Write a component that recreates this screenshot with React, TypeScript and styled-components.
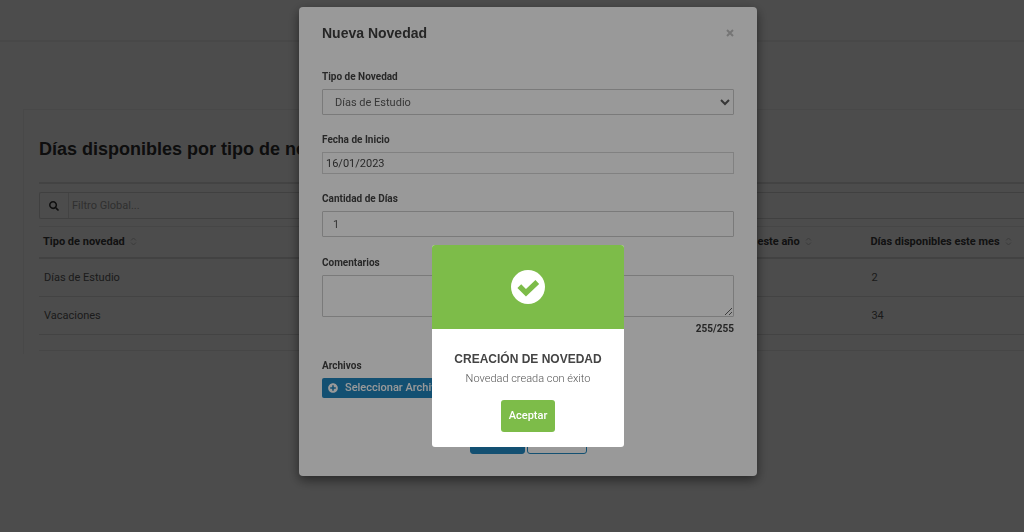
import React from "react";
import styled, { createGlobalStyle } from "styled-components";
import { FaPlusCircle, FaSearch } from "react-icons/fa";

const GlobalStyle = createGlobalStyle`
  *, *::before, *::after { box-sizing: border-box; }
  body {
    margin: 0;
    overflow: hidden;
    background: #fff;
    color: #5c5c5c;
    font: 11px/16px Roboto, "Liberation Sans", sans-serif;
  }
  button, input, select, textarea { font: inherit; color: inherit; }
`;

const headingFont = `"Liberation Sans", Arial, sans-serif`;

const TopBar = styled.header`
  height: 42px;
  border-bottom: 2px solid #f2f2f2;
`;

const Panel = styled.section`
  margin: 67px 0 0 23px;
  padding: 0 0 3px 15px;
  border: 1px solid #f0f0f0;
  border-width: 1px 0 0 1px;
`;

const PanelTitle = styled.h2`
  margin: 0;
  padding: 28px 0 21px;
  border-bottom: 2px solid #e0e0e0;
  color: #303030;
  font: bold 18px/23px ${headingFont};
  white-space: nowrap;
`;

const SearchGroup = styled.div`
  display: flex;
  height: 27px;
  margin: 8px 0 7px;
  border: 1px solid #d8d8d8;
  border-right: 0;
  border-radius: 2px 0 0 2px;
`;

const SearchIcon = styled.label`
  display: flex;
  align-items: center;
  justify-content: center;
  width: 29px;
  border-right: 1px solid #e2e2e2;
  color: #333;
  font-size: 10px;
`;

const SearchInput = styled.input`
  flex: 1;
  min-width: 0;
  padding: 0 3px;
  border: 0;
  outline: 0;
  background: transparent;
  &::placeholder { color: #a0a0a0; }
`;

const Table = styled.table`
  width: 100%;
  table-layout: fixed;
  border-collapse: separate;
  border-spacing: 0;
  border-top: 1px solid #eaeaea;
`;

const Column = styled.col<{ $share: number }>`
  width: ${(p) => p.$share}%;
`;

const HeadCell = styled.th`
  height: 32px;
  padding: 0 4px;
  border-bottom: 2px solid #dcdcdc;
  color: #3c3c3c;
  font-size: 11px;
  text-align: left;
  white-space: nowrap;
  svg { margin-left: 5px; vertical-align: -1px; }
`;

const Cell = styled.td`
  height: 38px;
  padding: 0 5px;
  border-bottom: 1px solid #e0e0e0;
`;

const TableEnd = styled.div`
  height: 16px;
  border-bottom: 1px solid #eaeaea;
`;

const Backdrop = styled.div<{ $shade: number; $top: number }>`
  position: fixed;
  inset: 0;
  display: flex;
  justify-content: center;
  align-items: flex-start;
  padding: ${(p) => p.$top}px 0 0 32px;
  background: rgba(0, 0, 0, ${(p) => p.$shade});
`;

const Dialog = styled.div`
  width: 458px;
  padding: 16px 23px 22px;
  border-radius: 4px;
  background: #fff;
  box-shadow: 0 4px 12px rgba(0, 0, 0, 0.5);
`;

const DialogHeader = styled.div`
  display: flex;
  align-items: center;
  justify-content: space-between;
  height: 20px;
  margin-bottom: 26px;
`;

const DialogTitle = styled.h3`
  margin: 0;
  color: #404040;
  font: bold 14px/20px ${headingFont};
`;

const CloseButton = styled.button`
  display: flex;
  padding: 0;
  border: 0;
  background: transparent;
  color: #c4c4c4;
`;

const Field = styled.div<{ $gap?: number }>`
  display: flex;
  flex-direction: column;
  margin-bottom: ${(p) => p.$gap ?? 17}px;
`;

const Label = styled.label`
  margin-bottom: 4px;
  color: #444;
  font-size: 10px;
  font-weight: bold;
  line-height: 16px;
`;

const Select = styled.select`
  height: 26px;
  padding: 0 8px;
  border: 1px solid #ccc;
  border-radius: 1px;
  background: #fff;
`;

const DateInput = styled.input`
  height: 22px;
  padding: 0 3px;
  border: 1px solid #d8d8d8;
  color: #444;
`;

const NumberInput = styled.input`
  height: 26px;
  padding: 0 10px;
  border: 1px solid #ccc;
  border-radius: 1px;
`;

const TextArea = styled.textarea`
  height: 42px;
  padding: 4px 10px;
  border: 1px solid #ccc;
  border-radius: 1px;
`;

const Counter = styled.span`
  align-self: flex-end;
  margin-top: 4px;
  color: #404040;
  font-size: 10px;
  font-weight: bold;
`;

const FileButton = styled.button`
  display: flex;
  align-items: center;
  align-self: flex-start;
  gap: 7px;
  height: 20px;
  padding: 0 6px;
  border: 0;
  border-radius: 2px;
  background: #2186be;
  color: #fff;
  font-weight: 500;
`;

const Actions = styled.div`
  display: flex;
  justify-content: center;
  gap: 2px;
`;

const ActionButton = styled.button<{ $primary?: boolean }>`
  width: ${(p) => (p.$primary ? 55 : 60)}px;
  height: 28px;
  padding: 0 0 8px;
  border: 1px solid #2186be;
  border-radius: 3px;
  background: ${(p) => (p.$primary ? "#2186be" : "#fff")};
  color: ${(p) => (p.$primary ? "#fff" : "#2186be")};
`;

const Alert = styled.div`
  width: 192px;
  overflow: hidden;
  border-radius: 3px;
  background: #fff;
  text-align: center;
`;

const AlertBanner = styled.div`
  display: flex;
  align-items: center;
  justify-content: center;
  height: 84px;
  background: #7dbc49;
`;

const AlertBody = styled.div`
  display: flex;
  flex-direction: column;
  align-items: center;
  padding: 20px 0 15px;
`;

const AlertTitle = styled.h4`
  margin: 0;
  color: #444;
  font: bold 12px/20px ${headingFont};
  white-space: nowrap;
`;

const AlertText = styled.p`
  margin: 2px 0 13px;
  color: #555;
  font-weight: 300;
`;

const AcceptButton = styled.button`
  width: 54px;
  height: 32px;
  padding: 0;
  border: 0;
  border-radius: 3px;
  background: #7dbc49;
  color: #fff;
  font-weight: 500;
`;

const SortIcon = () => (
  <svg width="7" height="9" viewBox="0 0 7 9" fill="none" stroke="#c4c4c4" aria-hidden="true">
    <path d="M1 3.5 3.5 1 6 3.5M1 5.5 3.5 8 6 5.5" />
  </svg>
);

const SuccessIcon = () => (
  <svg width="34" height="34" viewBox="-17 -17 34 34" fill="none" aria-hidden="true">
    <circle r="17" fill="#fff" />
    <path d="M-8.7 -.9 -2 5.8 9.3 -5" stroke="#7dbc49" strokeWidth="5.4" />
  </svg>
);

const rows = [
  { type: "Días de Estudio", month: 2 },
  { type: "Vacaciones", month: 34 },
];

export default function App() {
  return (
    <>
      <GlobalStyle />
      <TopBar />
      <Panel>
        <PanelTitle>Días disponibles por tipo de novedad</PanelTitle>
        <SearchGroup>
          <SearchIcon htmlFor="filter" aria-label="Filtro Global">
            <FaSearch />
          </SearchIcon>
          <SearchInput id="filter" placeholder="Filtro Global..." />
        </SearchGroup>
        <Table>
          <colgroup>
            <Column $share={64} />
            <Column $share={20} />
            <Column $share={16} />
          </colgroup>
          <thead>
            <tr>
              <HeadCell>Tipo de novedad<SortIcon /></HeadCell>
              <HeadCell>Días disponibles este año<SortIcon /></HeadCell>
              <HeadCell>Días disponibles este mes<SortIcon /></HeadCell>
            </tr>
          </thead>
          <tbody>
            {rows.map((row) => (
              <tr key={row.type}>
                <Cell>{row.type}</Cell>
                <Cell />
                <Cell>{row.month}</Cell>
              </tr>
            ))}
          </tbody>
        </Table>
        <TableEnd />
      </Panel>

      <Backdrop $shade={0.5} $top={7}>
        <Dialog role="dialog" aria-labelledby="dialog-title">
          <DialogHeader>
            <DialogTitle id="dialog-title">Nueva Novedad</DialogTitle>
            <CloseButton aria-label="Cerrar">
              <svg width="8" height="8" viewBox="0 0 8 8" stroke="currentColor" strokeWidth="2">
                <path d="M1 1 7 7M7 1 1 7" />
              </svg>
            </CloseButton>
          </DialogHeader>
          <Field>
            <Label htmlFor="type">Tipo de Novedad</Label>
            <Select id="type">
              <option>Días de Estudio</option>
              <option>Vacaciones</option>
            </Select>
          </Field>
          <Field>
            <Label htmlFor="start">Fecha de Inicio</Label>
            <DateInput id="start" defaultValue="16/01/2023" />
          </Field>
          <Field $gap={18}>
            <Label htmlFor="days">Cantidad de Días</Label>
            <NumberInput id="days" defaultValue="1" />
          </Field>
          <Field $gap={21}>
            <Label htmlFor="comments">Comentarios</Label>
            <TextArea id="comments" />
            <Counter>255/255</Counter>
          </Field>
          <Field $gap={28}>
            <Label as="span">Archivos</Label>
            <FileButton>
              <FaPlusCircle size={10} />
              Seleccionar Archivos
            </FileButton>
          </Field>
          <Actions>
            <ActionButton $primary>Crear</ActionButton>
            <ActionButton>Cancelar</ActionButton>
          </Actions>
        </Dialog>
      </Backdrop>

      <Backdrop $shade={0.4} $top={245}>
        <Alert role="alertdialog" aria-labelledby="alert-title">
          <AlertBanner>
            <SuccessIcon />
          </AlertBanner>
          <AlertBody>
            <AlertTitle id="alert-title">CREACIÓN DE NOVEDAD</AlertTitle>
            <AlertText>Novedad creada con éxito</AlertText>
            <AcceptButton>Aceptar</AcceptButton>
          </AlertBody>
        </Alert>
      </Backdrop>
    </>
  );
}
